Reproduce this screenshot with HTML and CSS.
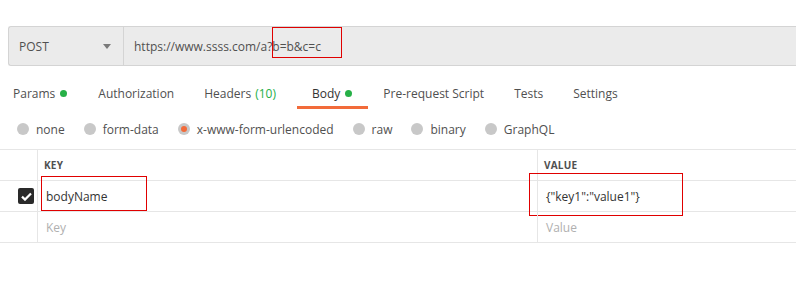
FILE: index.html
```html
<!DOCTYPE html>
<html>
<head>
<meta charset="utf-8">
<link rel="stylesheet" href="styles.css">
</head>
<body>
<div class="reqbar">
  <div class="method">
    <span>POST</span>
    <svg class="caret" width="8" height="5" viewBox="0 0 8 5"><path d="M0 0h8L4 5z" fill="#7a7a7a"/></svg>
  </div>
  <div class="url"><span class="urltext">https://www.ssss.com/a?<span class="mark">b=b&amp;c=c</span></span></div>
</div>
<div class="tabs">
  <div class="tab">Params <i class="dot"></i></div>
  <div class="tab">Authorization</div>
  <div class="tab headers">Headers <span class="count">(10)</span></div>
  <div class="tab active">Body <i class="dot"></i></div>
  <div class="tab">Pre-request Script</div>
  <div class="tab">Tests</div>
  <div class="tab">Settings</div>
</div>
<div class="radios">
  <div class="radio"><i class="circ"></i>none</div>
  <div class="radio"><i class="circ"></i>form-data</div>
  <div class="radio"><i class="circ sel"></i>x-www-form-urlencoded</div>
  <div class="radio"><i class="circ"></i>raw</div>
  <div class="radio"><i class="circ"></i>binary</div>
  <div class="radio"><i class="circ"></i>GraphQL</div>
</div>
<div class="table">
  <div class="row head">
    <div class="c0"></div>
    <div class="c1">KEY</div>
    <div class="c2">VALUE</div>
  </div>
  <div class="row">
    <div class="c0"><span class="check"><svg width="11" height="9" viewBox="0 0 11 9"><path d="M1 4.6l3 3L10 1.4" fill="none" stroke="#fff" stroke-width="2.2"/></svg></span></div>
    <div class="c1 val"><span class="box kbox"></span>bodyName</div>
    <div class="c2 val"><span class="box vbox"></span>{"key1":"value1"}</div>
  </div>
  <div class="row">
    <div class="c0"></div>
    <div class="c1 ph">Key</div>
    <div class="c2 ph">Value</div>
  </div>
</div>
</body>
</html>
```
FILE: styles.css
```css
* { box-sizing: border-box; }
body {
  margin: 0;
  padding-top: 26px;
  font-family: "Open Sans", "Liberation Sans", sans-serif;
  font-size: 12px;
  color: #505050;
  background: #fff;
  width: 796px;
  height: 285px;
  overflow: hidden;
}
.reqbar {
  margin-left: 8px;
  height: 40px;
  display: flex;
  border: 1px solid #d4d4d4;
  border-right: none;
  border-radius: 3px 0 0 3px;
  background: #ebebeb;
}
.method {
  width: 115px;
  border-right: 1px solid #d4d4d4;
  display: flex;
  align-items: center;
  justify-content: space-between;
  padding: 0 12px 0 10px;
  font-size: 12px;
  color: #505050;
}
.caret { margin-top: 1px; }
.url {
  flex: 1;
  display: flex;
  align-items: center;
  padding-left: 10px;
  color: #505050;
}
.urltext { position: relative; }
.mark { position: relative; }
.mark::after {
  content: "";
  position: absolute;
  left: 0;
  top: -11px;
  width: 68px;
  height: 29px;
  border: 1px solid #e00000;
}
.tabs {
  display: flex;
  margin-top: 14px;
  margin-left: -2px;
  height: 29px;
}
.tab {
  padding: 0 15px;
  display: flex;
  align-items: center;
  height: 29px;
  color: #505050;
  font-size: 12px;
  border-bottom: 3px solid transparent;
  padding-top: 1px;
}
.tab:first-child { padding-right: 16px; }
.tab.headers { padding-right: 21px; }
.tab.active { border-bottom-color: #f26b3a; color: #333; padding-right: 16px; }
.dot {
  display: inline-block;
  width: 7px;
  height: 7px;
  border-radius: 50%;
  background: #26b047;
  margin-left: 5px;
}
.count { color: #26b047; margin-left: 4px; }
.radios {
  display: flex;
  align-items: center;
  padding-left: 17px;
  height: 40px;
  gap: 19px;
}
.radio {
  display: flex;
  align-items: center;
  gap: 7px;
  color: #505050;
  font-size: 12px;
}
.circ {
  display: inline-block;
  width: 12px;
  height: 12px;
  border-radius: 50%;
  background: #c8c8c8;
  position: relative;
}
.circ.sel::after {
  content: "";
  position: absolute;
  left: 3px;
  top: 3px;
  width: 6px;
  height: 6px;
  border-radius: 50%;
  background: #f26b3a;
}
.table { border-top: 1px solid #e6e6e6; }
.row {
  display: flex;
  height: 31px;
  border-bottom: 1px solid #e6e6e6;
}
.c0 {
  width: 38px;
  border-right: 1px solid #e6e6e6;
  display: flex;
  align-items: center;
  padding-left: 18px;
}
.c1 {
  width: 500px;
  border-right: 1px solid #e6e6e6;
  display: flex;
  align-items: center;
  padding-left: 6px;
  position: relative;
}
.c2 {
  flex: 1;
  display: flex;
  align-items: center;
  padding-left: 6px;
  position: relative;
}
.head .c1, .head .c2 {
  font-size: 10px;
  font-weight: 700;
  color: #505050;
  letter-spacing: 0.2px;
}
.val { color: #333; font-size: 12px; padding-left: 8px; }
.ph { color: #b0b0b0; font-size: 12px; padding-left: 8px; }
.check {
  width: 16px;
  height: 16px;
  background: #2a2a2a;
  border-radius: 2px;
  display: flex;
  align-items: center;
  justify-content: center;
}
.box {
  position: absolute;
  border: 1px solid #e00000;
}
.kbox { left: 3px; top: -5px; width: 106px; height: 35px; }
.vbox { left: -9px; top: -8px; width: 154px; height: 43px; }
```
